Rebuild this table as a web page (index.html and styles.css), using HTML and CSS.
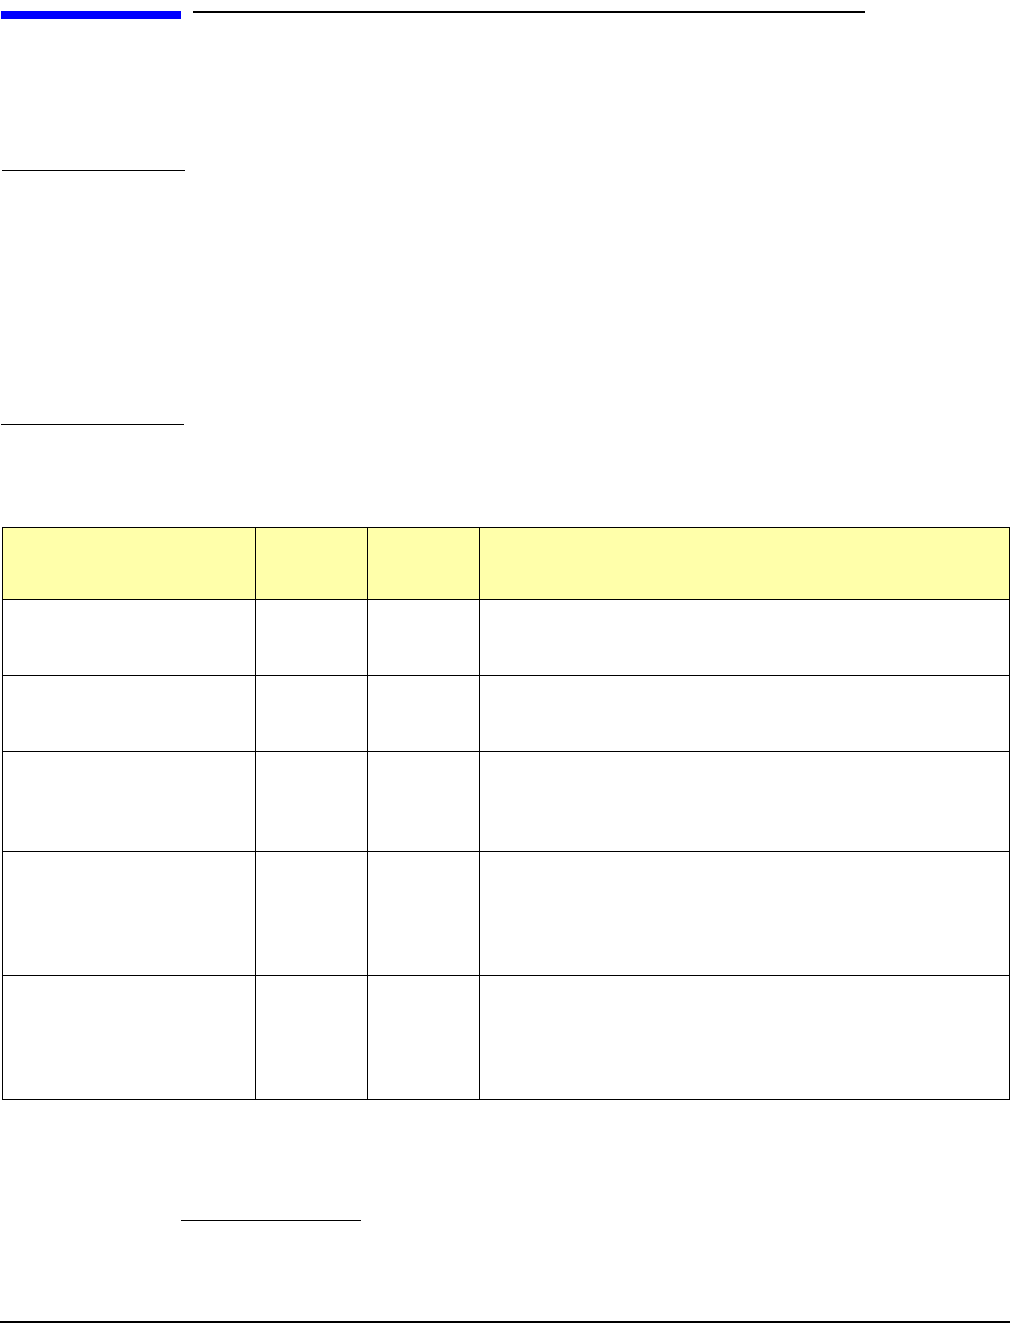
FILE: index.html
```html
<!DOCTYPE html>
<html lang="en">
<head>
<meta charset="utf-8">
<title>Page</title>
<link rel="stylesheet" href="styles.css">
</head>
<body>
<div class="page">
  <header class="top">
    <div class="blue-bar"></div>
    <div class="head-rule"></div>
  </header>
  <div class="rule rule-a"></div>
  <div class="rule rule-b"></div>
  <div class="grid">
    <div class="cell hd"></div><div class="cell hd"></div><div class="cell hd"></div><div class="cell hd"></div>
    <div class="cell"></div><div class="cell"></div><div class="cell"></div><div class="cell"></div>
    <div class="cell"></div><div class="cell"></div><div class="cell"></div><div class="cell"></div>
    <div class="cell"></div><div class="cell"></div><div class="cell"></div><div class="cell"></div>
    <div class="cell"></div><div class="cell"></div><div class="cell"></div><div class="cell"></div>
    <div class="cell"></div><div class="cell"></div><div class="cell"></div><div class="cell"></div>
  </div>
  <div class="rule rule-c"></div>
  <footer class="foot-rule"></footer>
</div>
</body>
</html>
```

FILE: styles.css
```css
html, body {
  margin: 0;
  padding: 0;
  background: #ffffff;
  font-family: "Liberation Sans", Arial, sans-serif;
}

.page {
  padding-top: 11px;
  width: 1010px;
}

.top {
  display: flex;
  align-items: flex-start;
}

.blue-bar {
  margin-left: 1px;
  width: 180px;
  height: 8px;
  background: #0000ff;
}

.head-rule {
  margin-left: 12px;
  width: 672px;
  height: 2px;
  background: #000000;
}

.rule {
  height: 1px;
  background: #000000;
}

.rule-a {
  margin-top: 151px;
  margin-left: 2px;
  width: 183px;
}

.rule-b {
  margin-top: 253px;
  margin-left: 1px;
  width: 183px;
}

.grid {
  margin-top: 102px;
  margin-left: 2px;
  width: 1008px;
  box-sizing: border-box;
  display: grid;
  grid-template-columns: 253px 112px 112px 530px;
  grid-template-rows: 72px 76px 76px 100px 124px 124px;
  border-top: 1px solid #000000;
  border-left: 1px solid #000000;
}

.cell {
  border-right: 1px solid #000000;
  border-bottom: 1px solid #000000;
}

.cell.hd {
  background: #ffffaa;
}

.rule-c {
  margin-top: 120px;
  margin-left: 181px;
  width: 180px;
}

.foot-rule {
  margin-top: 100px;
  height: 2px;
  background: #000000;
}
```
